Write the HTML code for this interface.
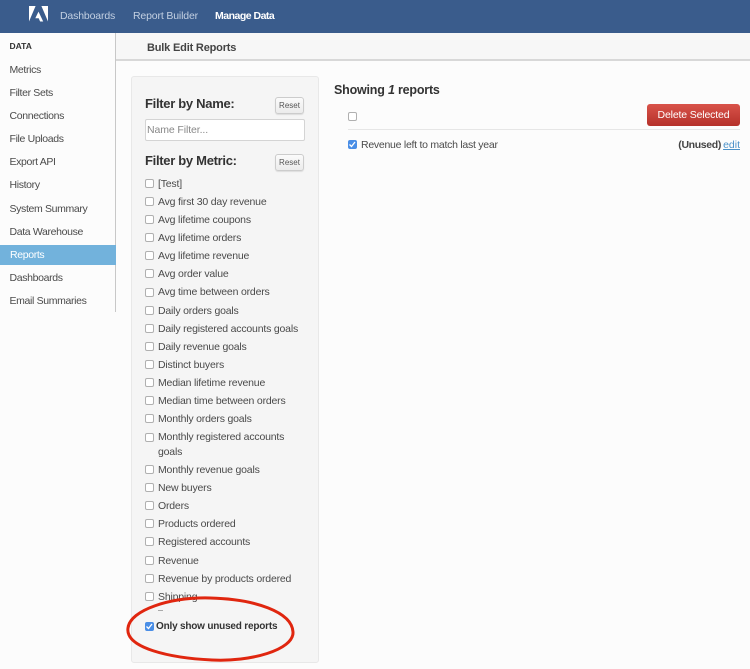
<!DOCTYPE html>
<html><head><meta charset="utf-8">
<style>
*{box-sizing:border-box}
html,body{margin:0;padding:0;width:750px;height:669px;overflow:hidden;background:#fcfcfc;font-family:"Liberation Sans",sans-serif;color:#444;position:relative}
.t{position:absolute;white-space:nowrap;line-height:14px;font-size:10.5px}
.nav{position:absolute;left:0;top:0;width:750px;height:33px;background:#3a5c8c}
.n{color:#c3d0e2;top:9px;letter-spacing:-.15px}
.side{position:absolute;left:0;top:33px;width:116px;height:279px;background:#fcfcfc;border-right:1px solid #c8c8c8}
.s{left:9.5px;color:#4a4a4a;font-size:10.5px;letter-spacing:-.35px;margin-top:1px}
.hdr{position:absolute;left:116px;top:33px;width:634px;height:28px;background:#f7f7f7;border-bottom:2px solid #d8d8d8}
.panel{position:absolute;left:131px;top:76px;width:188px;height:587px;background:#f5f5f5;border:1px solid #e8e8e8;border-radius:3px}
.h{font-weight:bold;font-size:13px;color:#333;letter-spacing:-.3px}
.btn{position:absolute;left:275px;width:29px;height:17px;background:linear-gradient(#fbfbfb,#ececec);border:1px solid #ccc;border-radius:3px;font-size:8px;line-height:15px;text-align:center;color:#555;box-shadow:0 1px 1px rgba(0,0,0,.1)}
.cb{position:absolute;width:9px;height:9px;border:1px solid #b0b0b0;border-radius:2px;background:#fff}
.cb.on{background:#4a8ee6;border-color:#4a8ee6}
.cb.on svg{position:absolute;left:-1px;top:-1px}
.m{left:158px;color:#4a4a4a;letter-spacing:-.19px;margin-top:1px}
</style></head><body>
<div class="nav"></div>
<svg style="position:absolute;left:29px;top:6px" width="20" height="16" viewBox="0 0 20 16"><path fill="#fff" d="M0 0H6.6L0 15.5ZM12.4 0H19V15.5ZM9.5 5.6L14.2 15.5H11.1L9.7 12.2H6.3Z"/></svg>
<div class="t n" style="left:60px">Dashboards</div>
<div class="t n" style="left:133px">Report Builder</div>
<div class="t" style="left:215px;top:9px;color:#fff;font-weight:bold;letter-spacing:-.5px">Manage Data</div>

<div class="side"></div>
<div class="t" style="left:9.5px;top:39px;font-size:8.5px;font-weight:bold;color:#333">DATA</div>
<div class="t s" style="top:62px">Metrics</div>
<div class="t s" style="top:85px">Filter Sets</div>
<div class="t s" style="top:108px">Connections</div>
<div class="t s" style="top:131px">File Uploads</div>
<div class="t s" style="top:154px">Export API</div>
<div class="t s" style="top:177px">History</div>
<div class="t s" style="top:201px">System Summary</div>
<div class="t s" style="top:224px">Data Warehouse</div>
<div style="position:absolute;left:0;top:245px;width:116px;height:20px;background:#72b2dc"></div>
<div class="t s" style="top:247px;color:#fff;left:10px">Reports</div>
<div class="t s" style="top:270px">Dashboards</div>
<div class="t s" style="top:293px">Email Summaries</div>

<div class="hdr"></div>
<div class="t" style="left:147px;top:41px;font-size:11px;font-weight:bold;color:#444;letter-spacing:-.18px">Bulk Edit Reports</div>

<div class="panel"></div>
<div class="t h" style="left:145px;top:97px">Filter by Name:</div>
<div class="btn" style="top:97px">Reset</div>
<div style="position:absolute;left:145px;top:119px;width:160px;height:22px;background:#fff;border:1px solid #d4d4d4;border-radius:2px"></div>
<div class="t" style="left:147px;top:123px;color:#888;letter-spacing:-.1px">Name Filter...</div>
<div class="t h" style="left:145px;top:154px">Filter by Metric:</div>
<div class="btn" style="top:154px">Reset</div>

<div class="cb" style="left:145px;top:179px"></div><div class="t m" style="top:176px">[Test]</div>
<div class="cb" style="left:145px;top:197px"></div><div class="t m" style="top:194px">Avg first 30 day revenue</div>
<div class="cb" style="left:145px;top:215px"></div><div class="t m" style="top:212px">Avg lifetime coupons</div>
<div class="cb" style="left:145px;top:233px"></div><div class="t m" style="top:230px">Avg lifetime orders</div>
<div class="cb" style="left:145px;top:251px"></div><div class="t m" style="top:248px">Avg lifetime revenue</div>
<div class="cb" style="left:145px;top:269px"></div><div class="t m" style="top:266px">Avg order value</div>
<div class="cb" style="left:145px;top:288px"></div><div class="t m" style="top:284px">Avg time between orders</div>
<div class="cb" style="left:145px;top:306px"></div><div class="t m" style="top:303px">Daily orders goals</div>
<div class="cb" style="left:145px;top:324px"></div><div class="t m" style="top:321px">Daily registered accounts goals</div>
<div class="cb" style="left:145px;top:342px"></div><div class="t m" style="top:339px">Daily revenue goals</div>
<div class="cb" style="left:145px;top:360px"></div><div class="t m" style="top:357px">Distinct buyers</div>
<div class="cb" style="left:145px;top:378px"></div><div class="t m" style="top:375px">Median lifetime revenue</div>
<div class="cb" style="left:145px;top:396px"></div><div class="t m" style="top:393px">Median time between orders</div>
<div class="cb" style="left:145px;top:414px"></div><div class="t m" style="top:411px">Monthly orders goals</div>
<div class="cb" style="left:145px;top:433px"></div><div class="t m" style="top:429px">Monthly registered accounts</div>
<div class="t m" style="top:444px">goals</div>
<div class="cb" style="left:145px;top:465px"></div><div class="t m" style="top:462px">Monthly revenue goals</div>
<div class="cb" style="left:145px;top:483px"></div><div class="t m" style="top:480px">New buyers</div>
<div class="cb" style="left:145px;top:501px"></div><div class="t m" style="top:498px">Orders</div>
<div class="cb" style="left:145px;top:519px"></div><div class="t m" style="top:516px">Products ordered</div>
<div class="cb" style="left:145px;top:537px"></div><div class="t m" style="top:534px">Registered accounts</div>
<div class="cb" style="left:145px;top:556px"></div><div class="t m" style="top:553px">Revenue</div>
<div class="cb" style="left:145px;top:574px"></div><div class="t m" style="top:571px">Revenue by products ordered</div>
<div class="cb" style="left:145px;top:592px"></div><div class="t m" style="top:589px">Shipping</div>
<div style="position:absolute;left:158px;top:610px;width:5px;height:1px;background:#aaa"></div>

<div class="cb on" style="left:145px;top:622px"><svg width="9" height="9" viewBox="0 0 9 9"><path d="M1.5 4.5L3.5 6.5L7 2" fill="none" stroke="#fff" stroke-width="1.3"/></svg></div>
<div class="t" style="left:156px;top:619px;margin-top:1px;font-weight:bold;color:#333;font-size:10px;letter-spacing:-.2px">Only show unused reports</div>

<div class="t" style="left:334px;top:83px;font-size:12.5px;font-weight:bold;color:#333;letter-spacing:-.2px">Showing <i>1</i> reports</div>
<div class="cb" style="left:348px;top:112px"></div>
<div style="position:absolute;left:647px;top:104px;width:93px;height:22px;background:linear-gradient(#d9534a,#b5312a);border-radius:3px;color:#fff;font-size:10.5px;line-height:22px;text-align:center;letter-spacing:-.15px">Delete Selected</div>
<div style="position:absolute;left:348px;top:129px;width:392px;height:1px;background:#e6e6e6"></div>
<div class="cb on" style="left:348px;top:140px"><svg width="9" height="9" viewBox="0 0 9 9"><path d="M1.5 4.5L3.5 6.5L7 2" fill="none" stroke="#fff" stroke-width="1.3"/></svg></div>
<div class="t" style="left:361px;top:138px;color:#4a4a4a;letter-spacing:-.26px">Revenue left to match last year</div>
<div class="t" style="right:29px;top:138px;font-weight:bold;color:#444;letter-spacing:-.35px">(Unused)</div>
<div class="t" style="right:10px;top:138px;color:#4a90c8;text-decoration:underline">edit</div>

<svg style="position:absolute;left:120px;top:590px" width="185" height="79" viewBox="0 0 185 79"><path d="M8 38C10 20 50 7 90 8C135 9 172 22 173 42C174 60 130 72 92 70C50 68 5 58 8 38Z" fill="none" stroke="#e0260f" stroke-width="3"/></svg>
</body></html>
